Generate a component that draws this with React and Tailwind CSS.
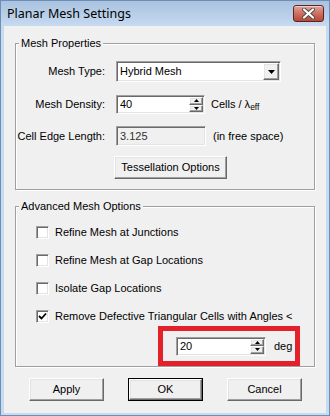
import React from "react";

const ui = "font-['Liberation_Sans',Arial,sans-serif] text-[11px] leading-[13px] text-black";

// classic 3D edges
const raised =
  "border border-t-white border-l-white border-r-[#696969] border-b-[#696969] shadow-[inset_-1px_-1px_0_#a0a0a0,inset_1px_1px_0_#e3e3e3] bg-[#f0f0f0]";
const sunken =
  "border border-t-[#a0a0a0] border-l-[#a0a0a0] border-r-white border-b-white shadow-[inset_1px_1px_0_#696969,inset_-1px_-1px_0_#e3e3e3]";

function CloseButton() {
  return (
    <div className="flex h-[17px] w-[31px] items-center justify-center rounded-[3px] border border-[#5a2420] bg-gradient-to-b from-[#e0a39a] via-[#cd6f61] to-[#b94636] shadow-[inset_0_1px_0_#f3cdc6]">
      <svg width="13" height="11" viewBox="0 0 13 11">
        <path d="M2 1.5 L11 9.5 M11 1.5 L2 9.5" stroke="#4a4a4a" strokeWidth="4" strokeLinecap="round" />
        <path d="M2 1.5 L11 9.5 M11 1.5 L2 9.5" stroke="#ffffff" strokeWidth="2.2" strokeLinecap="round" />
      </svg>
    </div>
  );
}

function Arrow({ dir }) {
  return (
    <svg width="5" height="3" viewBox="0 0 5 3">
      <path d={dir === "up" ? "M2.5 0 L5 3 L0 3 Z" : "M0 0 L5 0 L2.5 3 Z"} fill="#000" />
    </svg>
  );
}

function SpinBox({ value, width }) {
  return (
    <div className={`flex h-[19px] items-stretch bg-white ${sunken} ${width}`}>
      <div className="flex flex-1 items-center pl-[3px]">{value}</div>
      <div className="flex w-[15px] flex-col py-[1px] pr-[1px]">
        <div className={`flex flex-1 items-center justify-center ${raised}`}>
          <Arrow dir="up" />
        </div>
        <div className={`flex flex-1 items-center justify-center ${raised}`}>
          <Arrow dir="down" />
        </div>
      </div>
    </div>
  );
}

function Checkbox({ checked, label }) {
  return (
    <div className="flex items-center gap-[6px]">
      <div className={`flex h-[13px] w-[13px] items-center justify-center bg-white ${sunken}`}>
        {checked && (
          <svg width="9" height="9" viewBox="0 0 9 9">
            <path d="M1 4 L3.5 6.5 L8 1.5" fill="none" stroke="#000" strokeWidth="1.8" />
          </svg>
        )}
      </div>
      <span>{label}</span>
    </div>
  );
}

function Group({ title, className, children }) {
  return (
    <fieldset
      className={`mx-[11px] border border-[#a0a0a0] p-0 shadow-[1px_1px_0_#fff,inset_1px_1px_0_#fff] ${className}`}
    >
      <legend className="ml-[3px] bg-[#f0f0f0] px-[2px]">{title}</legend>
      {children}
    </fieldset>
  );
}

export default function App() {
  return (
    <div className="flex h-[416px] w-[330px] flex-col border border-[#6f8eb5] bg-[#c6daf0]">
      {/* title bar */}
      <div className="flex h-[25px] items-start justify-between bg-gradient-to-b from-[#a9c2df] to-[#c6daf0] pl-[6px] pr-[5px]">
        <span className="mt-[5px] font-['Noto_Sans',sans-serif] text-[12.5px] leading-[15px] text-black">
          Planar Mesh Settings
        </span>
        <div className="mt-[4px]">
          <CloseButton />
        </div>
      </div>

      <div className={`mx-[3px] flex-1 bg-[#f0f0f0] pt-[11px] ${ui}`}>
        <Group title="Mesh Properties" className="pb-[10px]">
          <div className="mt-[11px] grid grid-cols-[89px_auto] items-center gap-x-[11px]">
            <span className="text-right">Mesh Type:</span>
            <div className={`flex h-[21px] w-[165px] items-center bg-white ${sunken}`}>
              <span className="flex-1 pl-[3px]">Hybrid Mesh</span>
              <div className={`mr-[1px] flex h-[17px] w-[16px] items-center justify-center ${raised}`}>
                <svg width="7" height="4" viewBox="0 0 7 4">
                  <path d="M0 0 L7 0 L3.5 4 Z" fill="#000" />
                </svg>
              </div>
            </div>

            <span className="mt-[13px] text-right">Mesh Density:</span>
            <div className="mt-[13px] flex items-center gap-[6px]">
              <SpinBox value="40" width="w-[89px]" />
              <span>
                Cells / λ<sub className="text-[8.5px]">eff</sub>
              </span>
            </div>

            <span className="mt-[12px] text-right">Cell Edge Length:</span>
            <div className="mt-[12px] flex items-center gap-[7px]">
              <div className={`flex h-[20px] w-[90px] items-center bg-[#f0f0f0] pl-[3px] text-[#333] ${sunken}`}>
                3.125
              </div>
              <span>(in free space)</span>
            </div>

            <span />
            <button className={`ml-[-2px] mt-[10px] h-[23px] w-[113px] ${raised}`}>
              Tessellation Options
            </button>
          </div>
        </Group>

        <Group title="Advanced Mesh Options" className="mt-[10px]">
          <div className="flex flex-col gap-[15px] pl-[20px] pt-[13px]">
            <Checkbox label="Refine Mesh at Junctions" />
            <Checkbox label="Refine Mesh at Gap Locations" />
            <Checkbox label="Isolate Gap Locations" />
            <Checkbox checked label="Remove Defective Triangular Cells with Angles <" />
          </div>
          <div className="mt-[3px] flex justify-end pr-[14px]">
            <div className="flex h-[40px] w-[142px] items-center gap-[8px] border-[5px] border-[#e3212b] pl-[13px]">
              <SpinBox value="20" width="w-[90px]" />
              <span>deg</span>
            </div>
          </div>
        </Group>

        <div className="mt-[11px] flex gap-[24px] pl-[25px]">
          <button className={`h-[23px] w-[75px] ${raised}`}>Apply</button>
          <div className="border border-black">
            <button className={`block h-[21px] w-[73px] ${raised}`}>OK</button>
          </div>
          <button className={`h-[23px] w-[75px] ${raised}`}>Cancel</button>
        </div>
      </div>
      <div className="h-[2px]" />
    </div>
  );
}
